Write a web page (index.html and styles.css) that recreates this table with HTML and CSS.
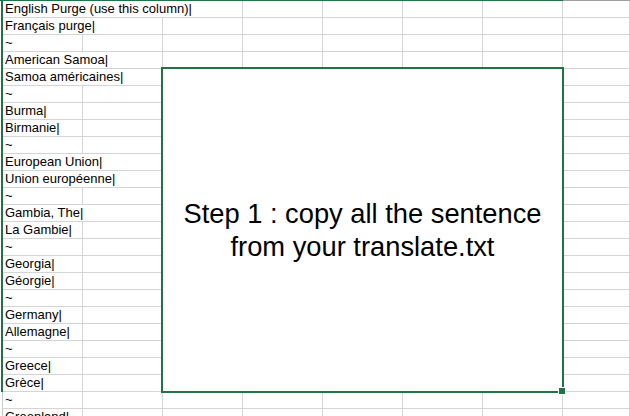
FILE: index.html
```html
<!DOCTYPE html>
<html lang="en">
<head>
    <meta charset="UTF-8">
    <meta name="viewport" content="width=device-width, initial-scale=1.0">
    <title>translate.xlsx</title>
    <link rel="stylesheet" href="styles.css">
</head>
<body>
    <div class="sheet">
        <div class="colhead">
            <div class="colhead-sel"></div>
            <div class="colhead-rest"></div>
        </div>
        <div id="rows"></div>

        <div class="selection">
            <p class="note">Step 1 : copy all the sentence<br>from your translate.txt</p>
            <span class="handle"></span>
        </div>
    </div>

    <script>
        // text of column A, and how many columns the text runs over
        const rows = [
            ['English Purge (use this column)|', 3],
            ['Français purge|', 2],
            ['~', 1],
            ['American Samoa|', 2],
            ['Samoa américaines|', 2],
            ['~', 1],
            ['Burma|', 1],
            ['Birmanie|', 1],
            ['~', 1],
            ['European Union|', 2],
            ['Union européenne|', 2],
            ['~', 1],
            ['Gambia, The|', 2],
            ['La Gambie|', 1],
            ['~', 1],
            ['Georgia|', 1],
            ['Géorgie|', 1],
            ['~', 1],
            ['Germany|', 1],
            ['Allemagne|', 1],
            ['~', 1],
            ['Greece|', 1],
            ['Grèce|', 1],
            ['~', 1],
            ['Greenland|', 1]
        ];
        const COLS = 8;
        const SELECTED_ROWS = 23;

        const rowsBox = document.getElementById('rows');

        rows.forEach(([text, span], i) => {
            const row = document.createElement('div');
            row.className = i < SELECTED_ROWS ? 'row' : 'row plain';

            let html = '<div class="gutter"></div>';
            html += `<div class="cell span${span}">${text}</div>`;
            for (let c = span; c < COLS; c++) {
                html += '<div class="cell"></div>';
            }
            row.innerHTML = html;
            rowsBox.appendChild(row);
        });
    </script>
</body>
</html>
```

FILE: styles.css
```css
body {
    margin: 0;
    background-color: #ffffff;
    font-family: "Liberation Sans", Arial, sans-serif;
    font-size: 13px;
    color: #000000;
    overflow: hidden;
}
.sheet {
    position: relative;
    width: 630px;
    height: 416px;
    overflow: hidden;
}
.colhead {
    display: flex;
    height: 1px;
}
.colhead-sel {
    width: 563px;
    background-color: #217346;
}
.colhead-rest {
    flex: 1;
    background-color: #9f9f9f;
}
.row {
    display: grid;
    grid-template-columns: 3px repeat(7, 80px) 1fr;
    height: 17px;
}
.gutter {
    border-right: 2px solid #217346;
}
.row.plain .gutter {
    border-right: 1px solid #c8c8c8;
}
.cell {
    box-sizing: border-box;
    height: 17px;
    padding-left: 2px;
    line-height: 16px;
    white-space: nowrap;
    overflow: hidden;
    border-right: 1px solid #d4d4d4;
    border-bottom: 1px solid #d4d4d4;
}
.span2 {
    grid-column: span 2;
}
.span3 {
    grid-column: span 3;
}
.selection {
    position: absolute;
    left: 161px;
    top: 67px;
    width: 403px;
    height: 326px;
    box-sizing: border-box;
    border: 2px solid #217346;
    background-color: #ffffff;
    display: flex;
    align-items: center;
    justify-content: center;
}
.note {
    margin: 0;
    font-size: 27.3px;
    line-height: 33px;
    text-align: center;
}
.handle {
    position: absolute;
    right: -4px;
    bottom: -4px;
    width: 6px;
    height: 6px;
    background-color: #217346;
    border: 1px solid #ffffff;
}
```
